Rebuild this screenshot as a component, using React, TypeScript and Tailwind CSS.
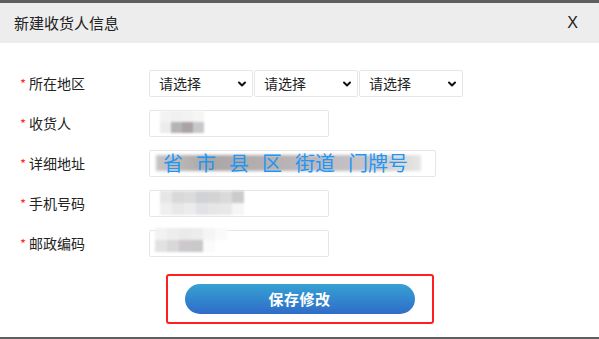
import { ChevronDown } from "lucide-react";

const font = { fontFamily: '"Noto Sans CJK SC", "Noto Sans", sans-serif' };

function Mosaic({ rows, cell = 12 }: { rows: string[][]; cell?: number }) {
  return (
    <div className="flex flex-col blur-[1.2px]">
      {rows.map((r, i) => (
        <div key={i} className="flex">
          {r.map((c, j) => (
            <div key={j} style={{ background: c, width: cell, height: cell }} />
          ))}
        </div>
      ))}
    </div>
  );
}

function Region() {
  return (
    <div className="flex gap-px">
      {[0, 1, 2].map((i) => (
        <div
          key={i}
          className="w-[104px] h-[27px] border border-[#e6e6e6] rounded-[2px] flex items-center justify-between pl-[9px] pr-[4px] text-[14px] text-[#222]"
        >
          <span>请选择</span>
          <ChevronDown className="w-[12px] h-[12px] text-[#111]" strokeWidth={4} />
        </div>
      ))}
    </div>
  );
}

function Row({ label, children }: { label: string; children: React.ReactNode }) {
  return (
    <div className="flex items-center h-[27px]">
      <div className="w-[129px] flex items-center text-[14px] text-[#222]">
        <span className="text-[#ff2a2a] w-[9px] text-[13px]">*</span>
        <span>{label}</span>
      </div>
      {children}
    </div>
  );
}

export default function App() {
  return (
    <div className="w-[599px] h-[339px] bg-white flex flex-col overflow-hidden" style={font}>
      <div className="h-[3px] bg-[#5f5f5f]" />
      <div className="h-[40px] bg-[#ededed] flex items-center justify-between pl-[14px] pr-[21px]">
        <span className="text-[15px] text-[#222]">新建收货人信息</span>
        <span className="text-[16px] text-[#222]" style={{ fontFamily: '"Liberation Sans", sans-serif' }}>
          X
        </span>
      </div>

      <div className="flex-1 flex flex-col pl-[20px] pt-[27px] gap-[13px]">
        <Row label="所在地区">
          <Region />
        </Row>
        <Row label="收货人">
          <div className="relative w-[180px] h-[27px] border border-[#e6e6e6] rounded-[2px]">
            <div className="absolute left-[10px] top-0">
              <Mosaic
                rows={[
                  ["#f3f3f3", "#f0f0f0", "#f2f2f2", "#f5f5f5"],
                  ["#ececec", "#b4b4b4", "#aaa3a3", "#c8c8cc"],
                ]}
                cell={11}
              />
            </div>
          </div>
        </Row>
        <Row label="详细地址">
          <div className="relative w-[287px] h-[27px] border border-[#e6e6e6] rounded-[2px]">
            <div className="absolute left-[6px] top-[4px] w-[265px] h-[16px] blur-[1.5px] bg-[linear-gradient(90deg,#c8c4c4,#aaa6a6_20%,#b6b2b2_45%,#bdb8bf_60%,#c7c4c7_80%,#e6e6e6)]" />
            <div className="absolute left-[13px] top-[-3px] flex gap-[13px] text-[20px] text-[#2196f3] leading-[30px]">
              <span>省</span>
              <span>市</span>
              <span>县</span>
              <span>区</span>
              <span>街道</span>
              <span>门牌号</span>
            </div>
          </div>
        </Row>
        <Row label="手机号码">
          <div className="relative w-[180px] h-[27px] border border-[#e6e6e6] rounded-[2px]">
            <div className="absolute left-[10px] top-0">
              <Mosaic
                rows={[
                  ["#e6e6e6", "#d9d9d9", "#dcdcdc", "#cfd2d6", "#d4d4d4", "#dadada", "#cbcbcb"],
                  ["#efefef", "#e8e8e8", "#ececec", "#e2e2e6", "#e6e6e6", "#e8e8e8", "#f6f6f6"],
                ]}
                cell={12}
              />
            </div>
          </div>
        </Row>
        <Row label="邮政编码">
          <div className="relative w-[180px] h-[27px] border border-[#e6e6e6] rounded-[2px]">
            <div className="absolute left-[5px] top-[-3px]">
              <Mosaic
                rows={[
                  ["#f2f2f2", "#ededed", "#eaeaea", "#ececec", "#f5f5f5", "#fafafa"],
                  ["#e2e2e2", "#d8d8d8", "#cdc8cc", "#c9c9c9", "#fbfbfb", "#ffffff"],
                ]}
                cell={12}
              />
            </div>
          </div>
        </Row>

        <div className="flex justify-center mt-[4px] -ml-[20px]">
          <div className="w-[268px] h-[50px] border-[2px] border-[#ff1f1f] rounded-[3px] flex items-center justify-center">
            <button className="w-[230px] h-[30px] rounded-full bg-[linear-gradient(180deg,#35a2d2,#2f6cc9)] text-white text-[15px] font-bold tracking-[0.5px]">
              保存修改
            </button>
          </div>
        </div>
      </div>
      <div className="h-[2px] bg-[#5f5f5f]" />
    </div>
  );
}
